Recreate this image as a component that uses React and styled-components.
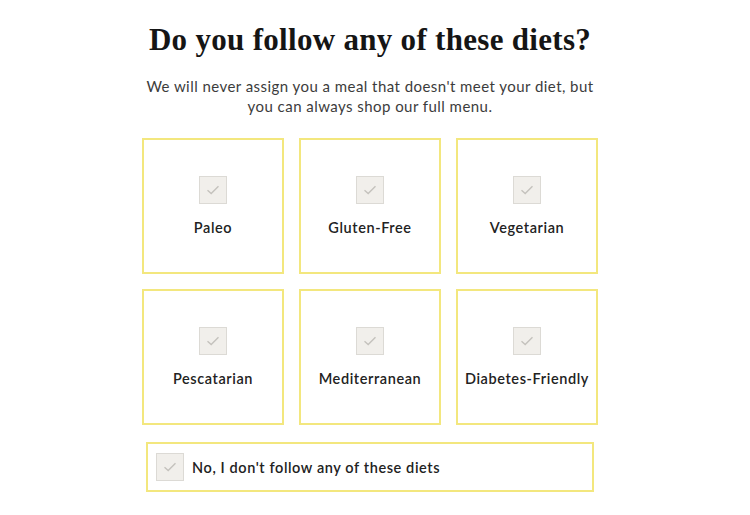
import React, { useState } from "react";
import styled, { createGlobalStyle } from "styled-components";

const GlobalStyle = createGlobalStyle`
  body {
    margin: 0;
    background: #fff;
    font-family: "Lato", "Open Sans", sans-serif;
  }
`;

const Page = styled.div`
  width: 750px;
  box-sizing: border-box;
  padding: 22px 10px 0 0;
  display: flex;
  flex-direction: column;
  align-items: center;
`;

const Title = styled.h1`
  margin: 0;
  font-family: "Liberation Serif", "DejaVu Serif", serif;
  font-size: 31px;
  font-weight: 700;
  line-height: 36px;
  color: #151515;
  letter-spacing: 0.3px;
`;

const Subtitle = styled.p`
  margin: 18px 0 0;
  width: 452px;
  text-align: center;
  font-size: 15px;
  line-height: 20px;
  color: #3c3c3c;
  letter-spacing: 0.45px;
`;

const Grid = styled.div`
  margin-top: 22px;
  width: 456px;
  display: grid;
  grid-template-columns: repeat(3, 142px);
  grid-auto-rows: 136px;
  column-gap: 15px;
  row-gap: 15px;
`;

const Card = styled.button`
  box-sizing: border-box;
  border: 2px solid #f3e77e;
  background: #fff;
  padding: 0;
  display: flex;
  flex-direction: column;
  align-items: center;
  justify-content: center;
  gap: 15px;
  cursor: pointer;
  font-family: inherit;
`;

const Box = styled.span`
  box-sizing: border-box;
  width: 28px;
  height: 28px;
  border: 1px solid ${(p) => (p.$checked ? "#c9b900" : "#dcdad5")};
  background: ${(p) => (p.$checked ? "#f3e77e" : "#f1efeb")};
  display: flex;
  align-items: center;
  justify-content: center;
`;

const Label = styled.span`
  font-size: 14.5px;
  font-weight: 600;
  color: #222;
  letter-spacing: 0.6px;
`;

const NoneRow = styled.button`
  box-sizing: border-box;
  margin-top: 17px;
  width: 448px;
  height: 50px;
  border: 2px solid #f3e77e;
  background: #fff;
  padding: 0 0 0 8px;
  display: flex;
  align-items: center;
  gap: 8px;
  cursor: pointer;
  font-family: inherit;
`;

const Check = ({ checked }) => (
  <Box $checked={checked}>
    <svg width="16" height="16" viewBox="0 0 16 16">
      <path
        d="M2.5 8.3 L6.2 11.6 L13.5 4.2"
        fill="none"
        stroke={checked ? "#333" : "#c4c2bd"}
        strokeWidth="1.4"
      />
    </svg>
  </Box>
);

const diets = [
  "Paleo",
  "Gluten-Free",
  "Vegetarian",
  "Pescatarian",
  "Mediterranean",
  "Diabetes-Friendly",
];

export default function App() {
  const [selected, setSelected] = useState([]);
  const [none, setNone] = useState(false);

  const toggle = (name) => {
    setNone(false);
    setSelected((s) =>
      s.includes(name) ? s.filter((x) => x !== name) : [...s, name]
    );
  };

  return (
    <>
      <GlobalStyle />
      <Page>
        <Title>Do you follow any of these diets?</Title>
        <Subtitle>
          We will never assign you a meal that doesn't meet your diet, but you
          can always shop our full menu.
        </Subtitle>
        <Grid>
          {diets.map((d) => (
            <Card key={d} onClick={() => toggle(d)}>
              <Check checked={selected.includes(d)} />
              <Label>{d}</Label>
            </Card>
          ))}
        </Grid>
        <NoneRow
          onClick={() => {
            setNone(!none);
            setSelected([]);
          }}
        >
          <Check checked={none} />
          <Label>No, I don't follow any of these diets</Label>
        </NoneRow>
      </Page>
    </>
  );
}
